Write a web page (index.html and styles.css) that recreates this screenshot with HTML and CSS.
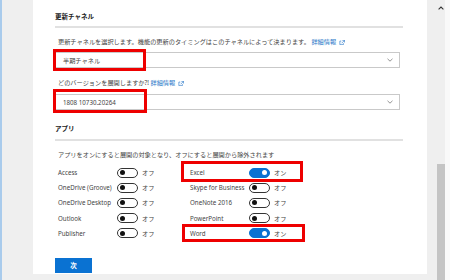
FILE: index.html
```html
<!DOCTYPE html>
<html lang="ja">
<head>
    <meta charset="UTF-8">
    <meta name="viewport" content="width=device-width, initial-scale=1.0">
    <title>展開の設定</title>
    <link rel="stylesheet" href="styles.css">
</head>
<body>
    <div class="frame">
        <div class="gutter"></div>
        <main class="panel">
            <h2 class="section-title first">更新チャネル</h2>
            <p class="note">更新チャネルを選択します。機能の更新のタイミングはこのチャネルによって決まります。 <a class="more" href="#">詳細情報<svg class="ext" viewBox="0 0 8 7"><path d="M3 1.5H1v5h5V4.5M4.5 0.5h3v3M7.5 0.5L3.5 4.5" fill="none" stroke="currentColor" stroke-width="0.9"/></svg></a></p>
            <div class="field channel">
                <div class="select"><span>半期チャネル</span><svg class="chev" viewBox="0 0 6 4"><path d="M0.5 0.8L3 3.2 5.5 0.8" fill="none" stroke="#777" stroke-width="0.8"/></svg></div>
                <span class="mark mark-channel"></span>
            </div>
            <p class="note ask">どのバージョンを展開しますか?! <a class="more" href="#">詳細情報<svg class="ext" viewBox="0 0 8 7"><path d="M3 1.5H1v5h5V4.5M4.5 0.5h3v3M7.5 0.5L3.5 4.5" fill="none" stroke="currentColor" stroke-width="0.9"/></svg></a></p>
            <div class="field version">
                <div class="select"><span>1808 10730.20264</span><svg class="chev" viewBox="0 0 6 4"><path d="M0.5 0.8L3 3.2 5.5 0.8" fill="none" stroke="#777" stroke-width="0.8"/></svg></div>
                <span class="mark mark-version"></span>
            </div>

            <h2 class="section-title apps-title">アプリ</h2>
            <p class="note">アプリをオンにすると展開の対象となり、オフにすると展開から除外されます</p>
            <ul class="apps">
                <li class="app"><span class="name">Access</span><span class="toggle"></span><span class="state">オフ</span></li>
                <li class="app"><span class="name">OneDrive (Groove)</span><span class="toggle"></span><span class="state">オフ</span></li>
                <li class="app"><span class="name">OneDrive Desktop</span><span class="toggle"></span><span class="state">オフ</span></li>
                <li class="app"><span class="name">Outlook</span><span class="toggle"></span><span class="state">オフ</span></li>
                <li class="app"><span class="name">Publisher</span><span class="toggle"></span><span class="state">オフ</span></li>
                <li class="app marked mark-excel"><span class="name">Excel</span><span class="toggle on"></span><span class="state">オン</span></li>
                <li class="app"><span class="name">Skype for Business</span><span class="toggle"></span><span class="state">オフ</span></li>
                <li class="app"><span class="name">OneNote 2016</span><span class="toggle"></span><span class="state">オフ</span></li>
                <li class="app"><span class="name">PowerPoint</span><span class="toggle"></span><span class="state">オフ</span></li>
                <li class="app marked mark-word"><span class="name">Word</span><span class="toggle on"></span><span class="state">オン</span></li>
            </ul>
            <button class="next">次</button>
        </main>
        <div class="scroll">
            <span class="scroll-up"><svg viewBox="0 0 6 4"><path d="M0.6 3.4L3 1 5.4 3.4" fill="none" stroke="#333" stroke-width="1.1"/></svg></span>
            <span class="thumb"></span>
        </div>
    </div>
</body>
</html>
```

FILE: styles.css
```css
body, html {
    margin: 0;
    padding: 0;
    width: 100%;
    height: 100%;
    overflow: hidden;
    background: #efefef;
    font-family: "Noto Sans", "Noto Sans CJK JP", sans-serif;
    color: #444;
}
.frame {
    display: flex;
    height: 280px;
}
.gutter {
    width: 33px;
    flex: none;
    border-left: 2px solid #a9cbec;
    box-sizing: border-box;
}
.panel {
    width: 394px;
    height: 274px;
    flex: none;
    box-sizing: border-box;
    padding: 0 24px 0 22px;
    background: #fff;
}
.section-title {
    margin: 0;
    font-size: 6.5px;
    line-height: 10px;
    font-weight: bold;
    color: #222;
    padding-bottom: 4px;
    border-bottom: 2px solid #e1e1e1;
}
.section-title.first {
    margin-top: 12px;
}
.section-title.apps-title {
    margin-top: 14px;
    padding-bottom: 5px;
}
.note {
    margin: 9px 0 0;
    padding-left: 3px;
    font-size: 6.2px;
    line-height: 10px;
    color: #444;
    white-space: nowrap;
}
.note.ask {
    margin-top: 10px;
}
.more {
    color: #2b79c8;
    text-decoration: none;
}
.ext {
    width: 6px;
    height: 5px;
    margin-left: 3px;
    vertical-align: -0.5px;
}
.field {
    position: relative;
    margin-top: 5px;
    width: 345px;
}
.field.version {
    margin-top: 6px;
}
.select {
    height: 16px;
    box-sizing: border-box;
    border: 1px solid #c9c9c9;
    display: flex;
    align-items: center;
    justify-content: space-between;
    padding: 0 6px 0 7px;
    font-size: 6.2px;
    color: #444;
}
.chev {
    width: 6px;
    height: 4px;
}
.mark {
    position: absolute;
    border: 3px solid #ee0000;
    box-sizing: border-box;
}
.mark-channel {
    left: -2px;
    top: -3px;
    width: 93px;
    height: 22px;
}
.mark-version {
    left: -2px;
    top: -5px;
    width: 94px;
    height: 24px;
}
.apps {
    list-style: none;
    margin: 5px 0 0;
    padding: 0 0 0 3px;
    display: grid;
    grid-template-columns: 132px 132px;
    grid-template-rows: repeat(5, 15.2px);
    grid-auto-flow: column;
}
.app {
    display: flex;
    align-items: center;
    position: relative;
    font-size: 6.2px;
}
.app .name {
    width: 59px;
    flex: none;
    white-space: nowrap;
}
.toggle {
    width: 21px;
    height: 10px;
    box-sizing: border-box;
    border: 1px solid #333;
    border-radius: 5px;
    display: flex;
    align-items: center;
    padding: 0 2px;
    flex: none;
}
.toggle::before {
    content: "";
    width: 5px;
    height: 5px;
    border-radius: 50%;
    background: #111;
}
.toggle.on {
    background: #0a72d2;
    border-color: #0a72d2;
    justify-content: flex-end;
}
.toggle.on::before {
    background: #fff;
}
.state {
    margin-left: 4px;
    color: #444;
}
.marked::after {
    content: "";
    position: absolute;
    border: 3px solid #ee0000;
    left: -9px;
    width: 116px;
}
.mark-excel::after {
    top: -4px;
    bottom: -2px;
}
.mark-word::after {
    top: -2px;
    bottom: -1px;
    left: -8px;
    width: 117px;
}
.next {
    display: block;
    margin-top: 17px;
    width: 37px;
    height: 15px;
    border: none;
    padding: 0;
    background: #0a72d2;
    color: #fff;
    font-family: "Noto Sans CJK JP", sans-serif;
    font-size: 6.5px;
    font-weight: bold;
}
.scroll {
    width: 8px;
    flex: none;
    margin-left: 10px;
    border-right: 5px solid #f9f9f9;
    background: #efefef;
    display: flex;
    flex-direction: column;
}
.scroll-up {
    height: 16px;
    display: flex;
    align-items: center;
    justify-content: center;
}
.scroll-up svg {
    width: 6px;
    height: 4px;
}
.thumb {
    margin-top: auto;
    height: 116px;
    background: #c4c4c4;
}
```
